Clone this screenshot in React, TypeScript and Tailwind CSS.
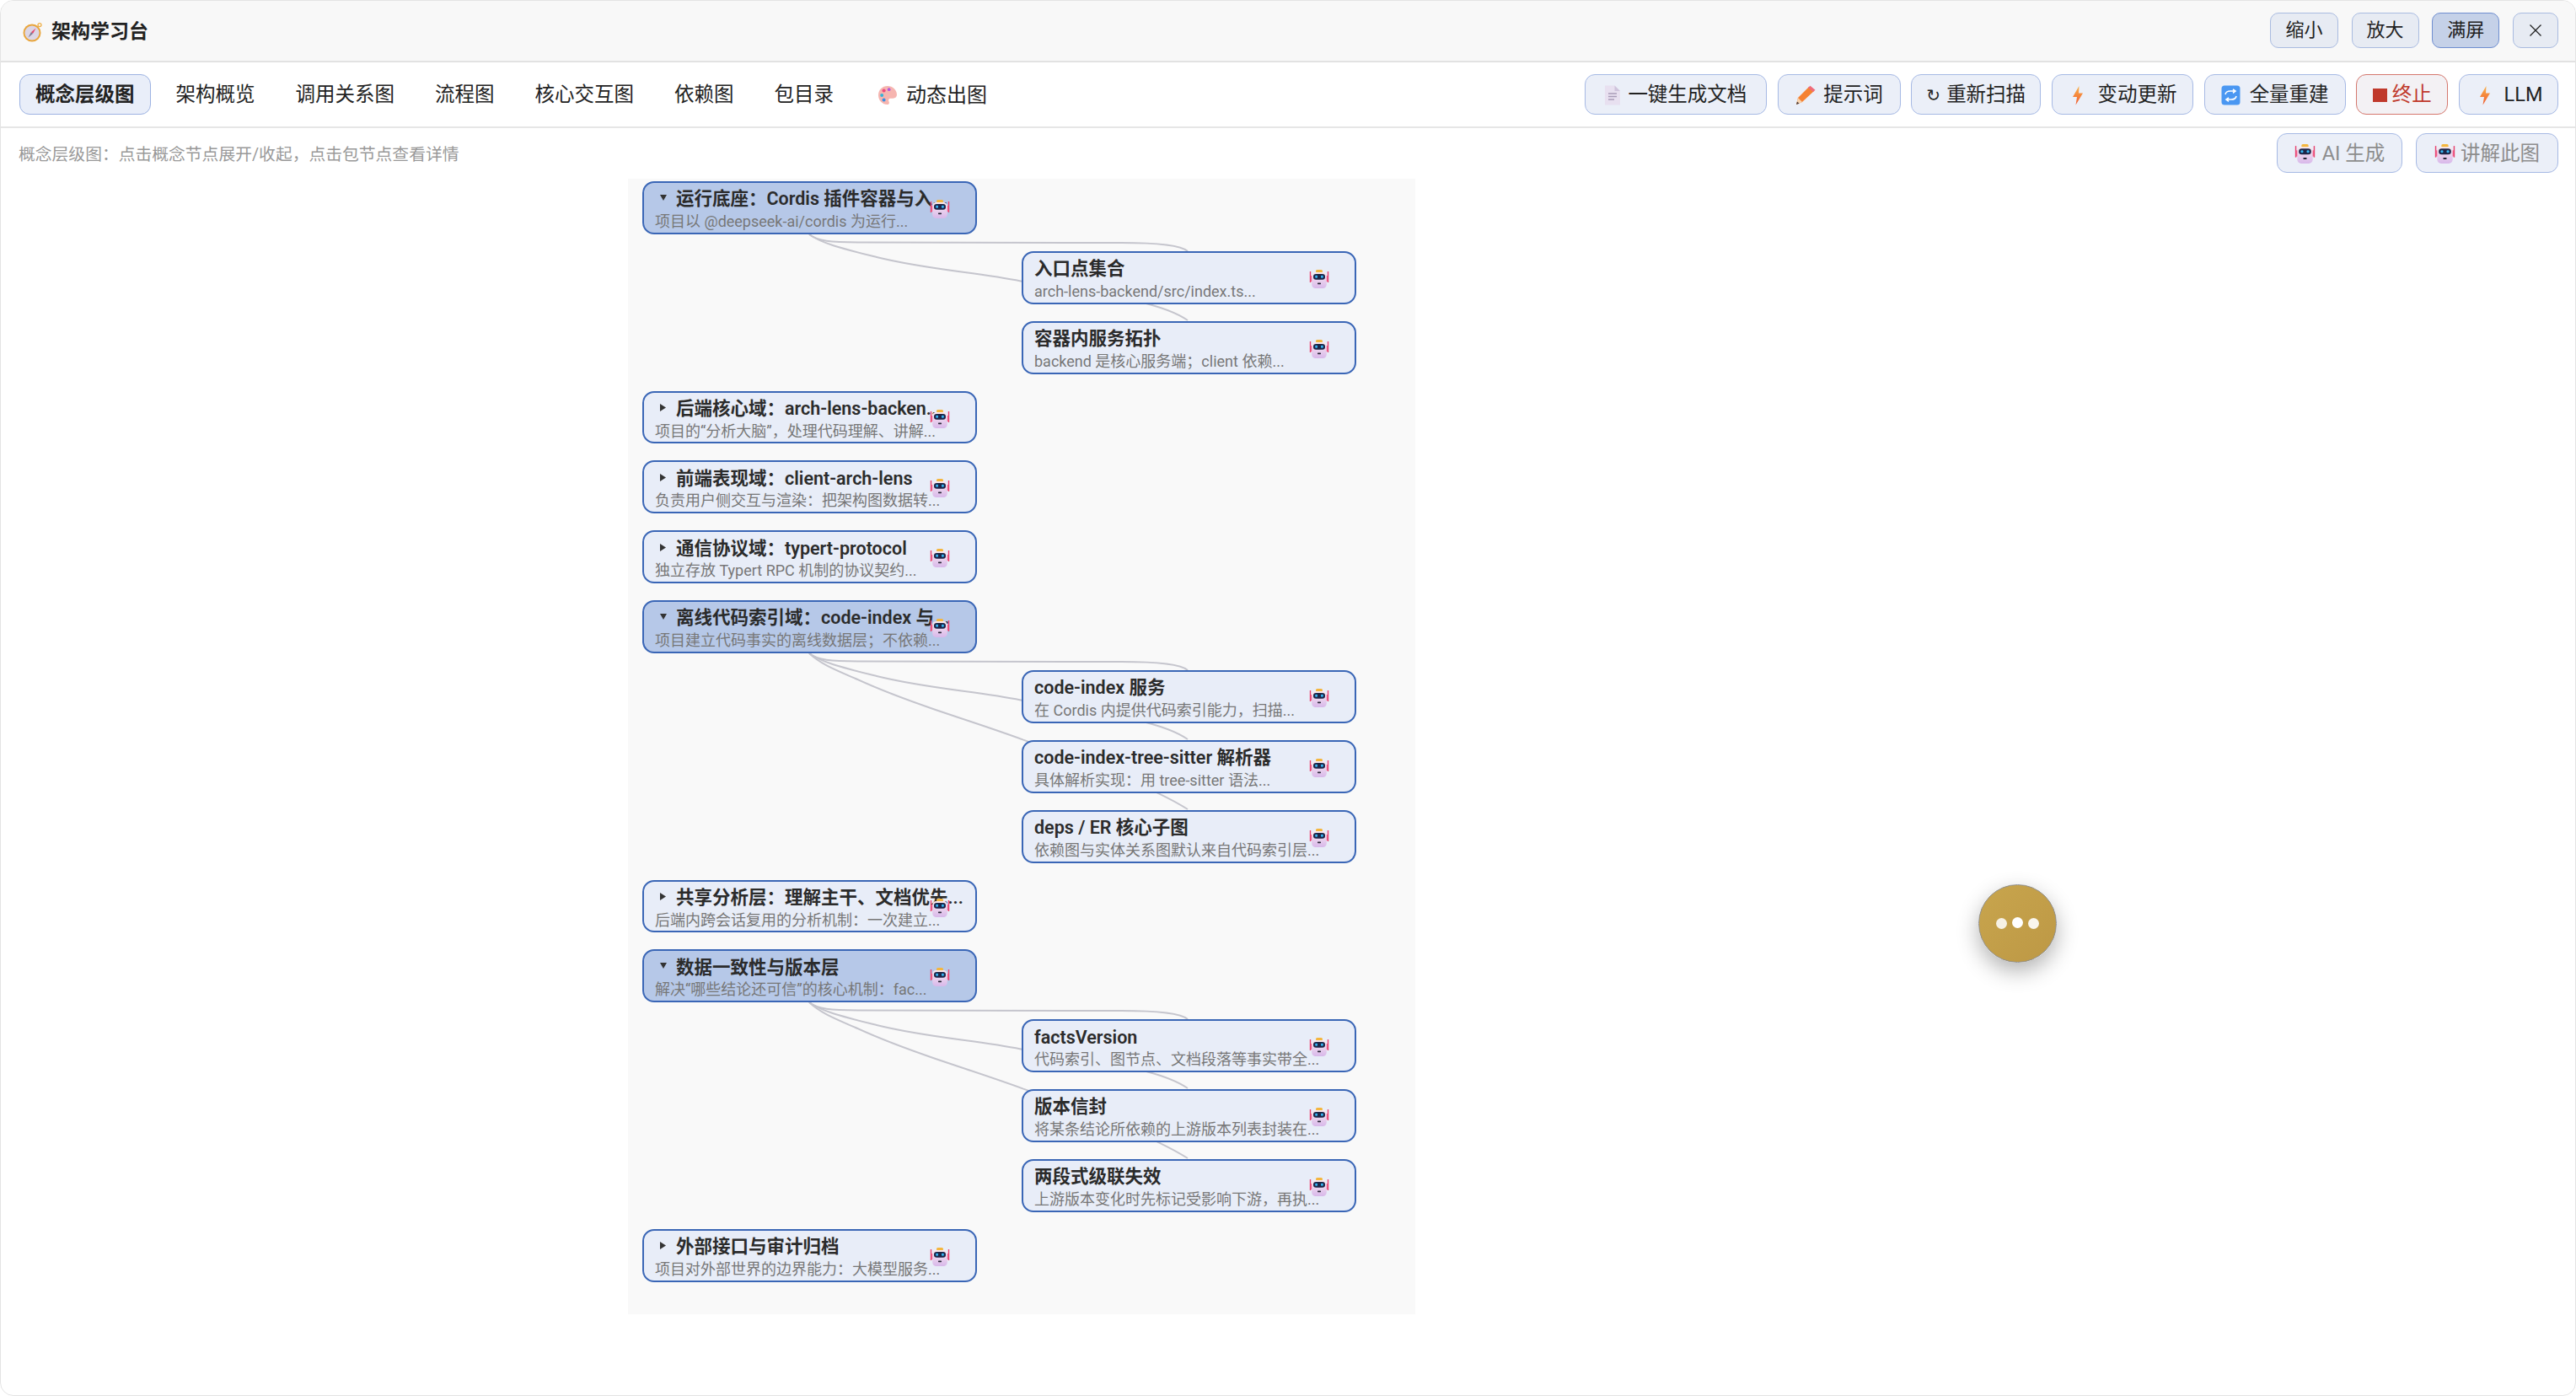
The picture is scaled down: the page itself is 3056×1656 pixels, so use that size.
import type { ReactNode } from "react";

const FONT = "font-['Roboto','Noto_Sans_CJK_SC',sans-serif]";

const RobotIcon = ({ className = "w-[24px] h-[24px]" }: { className?: string }) => (
  <svg viewBox="0 0 24 24" className={className}>
    <defs>
      <linearGradient id="robotHead" x1="0" y1="0" x2="0" y2="1">
        <stop offset="0" stopColor="#fbeaf0" />
        <stop offset="1" stopColor="#d8b8ea" />
      </linearGradient>
    </defs>
    <rect x="0.8" y="3" width="1.4" height="13" fill="#e8436f" />
    <rect x="21.8" y="3" width="1.4" height="13" fill="#e8436f" />
    <rect x="1.800" y="8" width="2" height="7" fill="#f0608a" />
    <rect x="20.200" y="8" width="2" height="7" fill="#f0608a" />
    <rect x="8" y="1" width="8" height="3.6" rx="1.6" fill="#f4b63f" />
    <rect x="3.200" y="4" width="17.600" height="19" rx="4.500" fill="url(#robotHead)" />
    <rect x="5" y="6" width="14" height="6.800" rx="3.200" fill="#1d2547" />
    <rect x="7.200" y="7.800" width="2.800" height="3" rx="1" fill="#38b6f4" />
    <rect x="14" y="7.800" width="2.800" height="3" rx="1" fill="#38b6f4" />
    <rect x="10" y="16.400" width="4" height="1.800" rx="0.600" fill="#2b2b3a" />
  </svg>
);

const CompassIcon = () => (
  <svg viewBox="0 0 24 24" className="w-[24px] h-[24px]">
    <circle cx="20" cy="3.6" r="2" fill="none" stroke="#eeb04a" strokeWidth="1.3" />
    <circle cx="11" cy="13" r="10.5" fill="#e9a63c" />
    <circle cx="11" cy="13" r="8.600" fill="#dcd6e6" />
    <path d="M15.5 7.5 L12.2 13.8 L9.8 12.2 Z" fill="#e5456a" />
    <path d="M6.5 18.5 L9.8 12.2 L12.2 13.8 Z" fill="#7d7890" />
  </svg>
);

const PaletteIcon = () => (
  <svg viewBox="1 1 20 20" className="w-[22px] h-[22px]">
    <path d="M11 1C5 1 1 5.5 1 11c0 5.5 4.5 10 9.5 10 2.5 0 2.6-2 1.8-3.5-.9-1.6.2-3.2 2-3.2h2.5c2.6 0 4.2-1.7 4.2-4C20.800 5 16.500 1 11 1Z" fill="#f6b5b0" />
    <circle cx="7" cy="6" r="1.9" fill="#ef4d7d" />
    <circle cx="12.500" cy="4.800" r="1.700" fill="#b75ad8" />
    <circle cx="4.800" cy="11" r="1.800" fill="#36b3d9" />
    <circle cx="7" cy="16" r="1.800" fill="#3c8fe0" />
  </svg>
);

const DocIcon = () => (
  <svg viewBox="0 0 20 24" className="w-[20px] h-[24px]">
    <path d="M1 0.500H12.500L19 7V23.500H1Z" fill="#e8e0f0" />
    <path d="M12.500 0.500L19 7H12.500Z" fill="#cfc4dc" />
    <path d="M5 10h10M5 13.500h10M5 17h7" stroke="#a99cb8" strokeWidth="1.300" />
  </svg>
);

const PencilIcon = () => (
  <svg viewBox="0 0 25 24" className="w-[25px] h-[24px]">
    <path d="M2 23 L4 15 L17 2 L23 7 L9 20 Z" fill="#f58233" />
    <path d="M2 23 L4 15 L9 20 Z" fill="#f8d3ae" />
    <path d="M2 23 L3 19.500 L5.500 21.800 Z" fill="#4a3a36" />
    <path d="M16 3 L18.500 0.800 L24.500 5.800 L22 8 Z" fill="#ef6a7a" />
  </svg>
);

const BoltIcon = () => (
  <svg viewBox="0 0 24 24" className="w-[24px] h-[24px]">
    <defs>
      <linearGradient id="bolt" x1="0" y1="0" x2="0" y2="1">
        <stop offset="0" stopColor="#f9b44a" />
        <stop offset="1" stopColor="#f0592f" />
      </linearGradient>
    </defs>
    <path d="M13.500 1 L6 14 H11 L9.500 23.500 L18 9.500 H13 Z" fill="url(#bolt)" />
  </svg>
);

const SyncIcon = () => (
  <svg viewBox="0 0 23 24" className="w-[23px] h-[24px]">
    <rect x="0.500" y="0.500" width="22" height="23" rx="3.500" fill="#4a97f2" />
    <path d="M5 11 C5.500 8 8 7 11 7 H16 M14 4.800 L17 7 L14 9.300" fill="none" stroke="#fff" strokeWidth="1.600" />
    <path d="M18 13 C17.500 16 15 17 12 17 H7 M9 14.800 L6 17 L9 19.300" fill="none" stroke="#fff" strokeWidth="1.600" />
  </svg>
);

const ToolButton = ({ children, className = "" }: { children: ReactNode; className?: string }) => (
  <button
    className={`flex items-center justify-center h-[48px] rounded-[12px] border border-[#a6b9e4] bg-[#ebeff8] pt-[2px] text-[23.500px] leading-none text-[#222] whitespace-nowrap ${className}`}
  >
    {children}
  </button>
);

const WindowButton = ({ children, active, className = "" }: { children: ReactNode; active?: boolean; className?: string }) => (
  <button
    className={`flex items-center justify-center h-[42px] rounded-[10px] border text-[22px] leading-none text-[#222] ${
      active ? "bg-[#c5d1e8] border-[#6f8ed0]" : "bg-[#e7ebf3] border-[#a9bbe0]"
    } ${className}`}
  >
    {children}
  </button>
);

const tabs = ["架构概览", "调用关系图", "流程图", "核心交互图", "依赖图", "包目录"];

interface Row {
  title: string;
  sub: string;
  arrow?: "open" | "closed";
}

const rows: Row[] = [
  { title: "运行底座：Cordis 插件容器与入...", sub: "项目以 @deepseek-ai/cordis 为运行...", arrow: "open" },
  { title: "入口点集合", sub: "arch-lens-backend/src/index.ts..." },
  { title: "容器内服务拓扑", sub: "backend 是核心服务端；client 依赖..." },
  { title: "后端核心域：arch-lens-backen...", sub: "项目的“分析大脑”，处理代码理解、讲解...", arrow: "closed" },
  { title: "前端表现域：client-arch-lens", sub: "负责用户侧交互与渲染：把架构图数据转...", arrow: "closed" },
  { title: "通信协议域：typert-protocol", sub: "独立存放 Typert RPC 机制的协议契约...", arrow: "closed" },
  { title: "离线代码索引域：code-index 与...", sub: "项目建立代码事实的离线数据层；不依赖...", arrow: "open" },
  { title: "code-index 服务", sub: "在 Cordis 内提供代码索引能力，扫描..." },
  { title: "code-index-tree-sitter 解析器", sub: "具体解析实现：用 tree-sitter 语法..." },
  { title: "deps / ER 核心子图", sub: "依赖图与实体关系图默认来自代码索引层..." },
  { title: "共享分析层：理解主干、文档优先...", sub: "后端内跨会话复用的分析机制：一次建立...", arrow: "closed" },
  { title: "数据一致性与版本层", sub: "解决“哪些结论还可信”的核心机制：fac...", arrow: "open" },
  { title: "factsVersion", sub: "代码索引、图节点、文档段落等事实带全..." },
  { title: "版本信封", sub: "将某条结论所依赖的上游版本列表封装在..." },
  { title: "两段式级联失效", sub: "上游版本变化时先标记受影响下游，再执..." },
  { title: "外部接口与审计归档", sub: "项目对外部世界的边界能力：大模型服务...", arrow: "closed" },
];

const EDGE_FLAT = "M0 0 C10 8 25 9.500 60 9.500 L370 10 C410 10 440 12 449 20";
const EDGE_SECOND = "M0 0 C15 11 40 17 80 27 C140 42 200 45 251 55.500 C320 69 410 75 449 102";
const EDGE_THIRD = "M0 0 C15 14 35 21 55 30 C85 44 115 55 147 66 C185 79 220 90 254 102.600 C320 125 410 160 449 185";

// parent bottoms in canvas coordinates, origin at the parent's bottom centre
const edgeGroups = [
  { y: 66, paths: [EDGE_FLAT, EDGE_SECOND] },
  { y: 563, paths: [EDGE_FLAT, EDGE_SECOND, EDGE_THIRD] },
  { y: 977, paths: [EDGE_FLAT, EDGE_SECOND, EDGE_THIRD] },
];

const NodeCard = ({ row }: { row: Row }) => {
  const isChild = !row.arrow;
  const expanded = row.arrow === "open";
  return (
    <div
      className={`relative h-[62.87px] w-[397px] shrink-0 overflow-hidden rounded-[14px] border-2 border-[#3a66b6] pl-[13px] pt-[4px] ${
        expanded ? "bg-[#b6c8e8]" : "bg-[#e8edf8]"
      } ${isChild ? "ml-[467px]" : "ml-[17px]"}`}
    >
      <div className="flex items-center h-[30px] text-[21.500px] leading-none font-semibold text-[#2b2b2b] whitespace-nowrap">
        {row.arrow === "open" && (
          <svg viewBox="0 0 8 7" className="ml-[6px] mr-[11px] -mt-[4px] w-[8px] h-[7px] shrink-0">
            <path d="M0 0H8L4 7Z" fill="#333" />
          </svg>
        )}
        {row.arrow === "closed" && (
          <svg viewBox="0 0 7 9" className="ml-[6px] mr-[12px] -mt-[2px] w-[7px] h-[9px] shrink-0">
            <path d="M0 0L7 4.500L0 9Z" fill="#333" />
          </svg>
        )}
        <span>{row.title}</span>
      </div>
      <div className="text-[18px] leading-[24px] text-[#777] whitespace-nowrap">{row.sub}</div>
      <div className="absolute right-[30px] top-[19px]">
        <RobotIcon />
      </div>
    </div>
  );
};

const App = () => {
  return (
    <div className={`relative flex h-[1656px] w-[3056px] flex-col overflow-hidden rounded-[16px] border border-[#e4e4e4] bg-white ${FONT}`}>
      <div className="flex h-[73px] shrink-0 items-center justify-between border-b-2 border-[#e2e2e2] bg-[#f8f8f8] pl-[26px] pr-[20px]">
        <div className="flex items-center gap-[10px] pt-[2px]">
          <CompassIcon />
          <span className="text-[23px] font-bold leading-none text-[#222]">架构学习台</span>
        </div>
        <div className="flex items-center gap-[15.700px] -mt-[2px]">
          <WindowButton className="w-[81px]">缩小</WindowButton>
          <WindowButton className="w-[80px]">放大</WindowButton>
          <WindowButton active className="w-[80px]">满屏</WindowButton>
          <WindowButton className="w-[54px]">
            <svg viewBox="0 0 16 16" className="w-[16px] h-[16px]">
              <path d="M1.500 1.500L14.500 14.500M14.500 1.500L1.500 14.500" stroke="#222" strokeWidth="1.300" />
            </svg>
          </WindowButton>
        </div>
      </div>

      <div className="flex h-[78px] shrink-0 items-center justify-between border-b-2 border-[#e6e6e6] pl-[22px] pr-[20px]">
        <div className="flex items-center gap-[12px]">
          <button className="flex h-[48px] items-center rounded-[12px] border border-[#9db3e2] bg-[#e9eef9] px-[18px] pt-[2px] text-[23.500px] font-bold leading-none text-[#222]">
            概念层级图
          </button>
          {tabs.map((t) => (
            <button key={t} className="flex h-[48px] items-center px-[18px] pt-[2px] text-[23.500px] leading-none text-[#222]">
              {t}
            </button>
          ))}
          <button className="ml-[5px] flex h-[48px] items-center gap-[11px] px-[18px] pt-[2px] text-[24px] leading-none text-[#222]">
            <PaletteIcon />
            动态出图
          </button>
        </div>
        <div className="flex items-center gap-[12.700px]">
          <ToolButton className="w-[216px] gap-[8px]"><DocIcon />一键生成文档</ToolButton>
          <ToolButton className="w-[146px] gap-[9px]"><PencilIcon />提示词</ToolButton>
          <ToolButton className="w-[154px] gap-[7px]"><span className="font-['DejaVu_Sans'] text-[20px]">↻</span>重新扫描</ToolButton>
          <ToolButton className="w-[168px] gap-[11px]"><BoltIcon />变动更新</ToolButton>
          <ToolButton className="w-[168px] gap-[11px]"><SyncIcon />全量重建</ToolButton>
          <ToolButton className="w-[109px] gap-[6px] !border-[#d5786e] !bg-[#f3f1f4] !text-[#c0392b]">
            <span className="h-[16px] w-[17px] bg-[#c0392b]" />终止
          </ToolButton>
          <ToolButton className="w-[118px] gap-[11px]"><BoltIcon />LLM</ToolButton>
        </div>
      </div>

      <div className="flex h-[60px] shrink-0 items-start justify-between pl-[21px] pr-[20px] pt-[6px]">
        <span className="mt-[14px] text-[19.800px] leading-[24px] text-[#999]">概念层级图：点击概念节点展开/收起，点击包节点查看详情</span>
        <div className="flex items-center gap-[16px]">
          <ToolButton className="!h-[47px] w-[149px] gap-[8px] !text-[#8d8d8d]"><RobotIcon className="w-[25px] h-[25px]" />AI 生成</ToolButton>
          <ToolButton className="!h-[47px] w-[169px] gap-[6px] !text-[#8d8d8d]"><RobotIcon className="w-[25px] h-[25px]" />讲解此图</ToolButton>
        </div>
      </div>

      <div className="relative ml-[744px] flex h-[1347px] w-[934px] flex-col gap-[20px] bg-[#f9f9f9] pt-[3px]">
        <svg className="absolute left-0 top-0 h-full w-full" fill="none">
          {edgeGroups.map((g) => (
            <g key={g.y} transform={`translate(215 ${g.y})`}>
              {g.paths.map((d) => (
                <path key={d} d={d} stroke="#c5c5cd" strokeWidth="2" />
              ))}
            </g>
          ))}
        </svg>
        {rows.map((row) => (
          <NodeCard key={row.title} row={row} />
        ))}
      </div>

      <button className="absolute left-[2346px] top-[1048px] flex h-[93px] w-[93px] items-center justify-center gap-[6px] rounded-full border border-[#8f8f8f] bg-gradient-to-br from-[#c8a54d] to-[#bd9845] shadow-[0_10px_26px_rgba(0,0,0,0.3)]">
        <span className="h-[13px] w-[13px] rounded-full bg-white/85" />
        <span className="h-[13px] w-[13px] -translate-y-[1px] rounded-full bg-white" />
        <span className="h-[13px] w-[13px] rounded-full bg-white/90" />
      </button>
    </div>
  );
};

export default App;
